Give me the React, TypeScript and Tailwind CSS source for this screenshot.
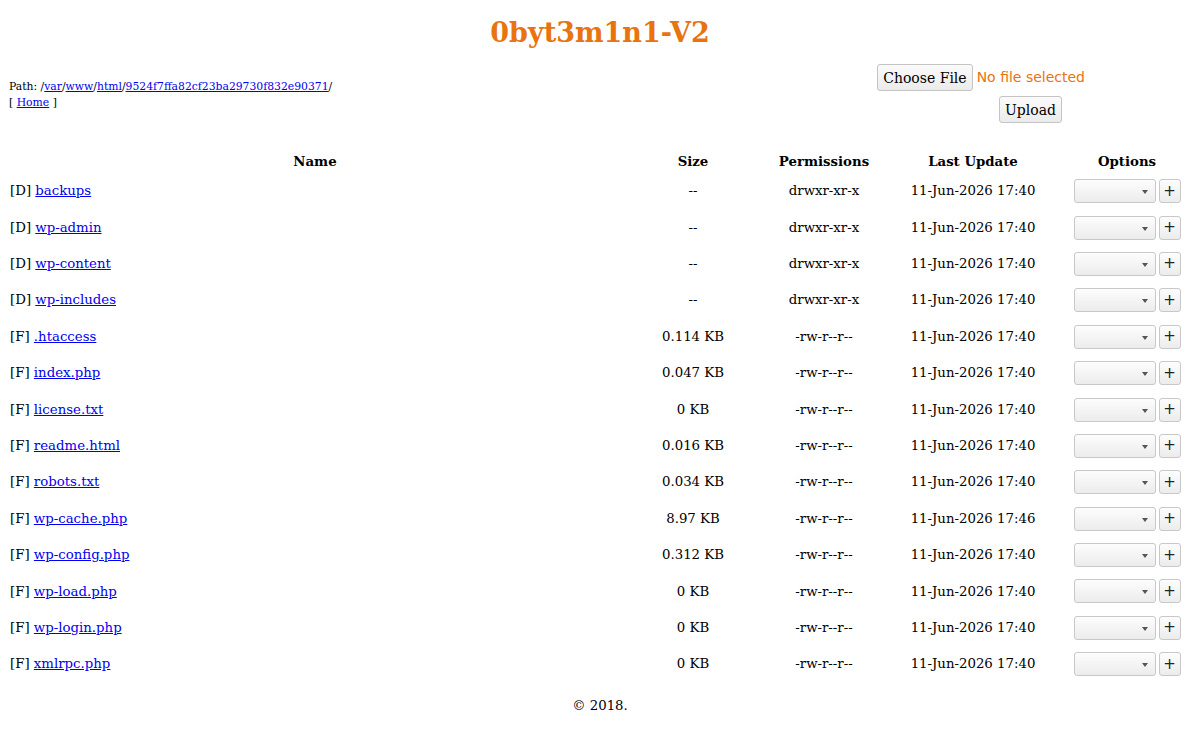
import React from 'react'

type Entry = {
  kind: 'D' | 'F'
  name: string
  size: string
  perms: string
  updated: string
}

const entries: Entry[] = [
  { kind: 'D', name: 'backups', size: '--', perms: 'drwxr-xr-x', updated: '11-Jun-2026 17:40' },
  { kind: 'D', name: 'wp-admin', size: '--', perms: 'drwxr-xr-x', updated: '11-Jun-2026 17:40' },
  { kind: 'D', name: 'wp-content', size: '--', perms: 'drwxr-xr-x', updated: '11-Jun-2026 17:40' },
  { kind: 'D', name: 'wp-includes', size: '--', perms: 'drwxr-xr-x', updated: '11-Jun-2026 17:40' },
  { kind: 'F', name: '.htaccess', size: '0.114 KB', perms: '-rw-r--r--', updated: '11-Jun-2026 17:40' },
  { kind: 'F', name: 'index.php', size: '0.047 KB', perms: '-rw-r--r--', updated: '11-Jun-2026 17:40' },
  { kind: 'F', name: 'license.txt', size: '0 KB', perms: '-rw-r--r--', updated: '11-Jun-2026 17:40' },
  { kind: 'F', name: 'readme.html', size: '0.016 KB', perms: '-rw-r--r--', updated: '11-Jun-2026 17:40' },
  { kind: 'F', name: 'robots.txt', size: '0.034 KB', perms: '-rw-r--r--', updated: '11-Jun-2026 17:40' },
  { kind: 'F', name: 'wp-cache.php', size: '8.97 KB', perms: '-rw-r--r--', updated: '11-Jun-2026 17:46' },
  { kind: 'F', name: 'wp-config.php', size: '0.312 KB', perms: '-rw-r--r--', updated: '11-Jun-2026 17:40' },
  { kind: 'F', name: 'wp-load.php', size: '0 KB', perms: '-rw-r--r--', updated: '11-Jun-2026 17:40' },
  { kind: 'F', name: 'wp-login.php', size: '0 KB', perms: '-rw-r--r--', updated: '11-Jun-2026 17:40' },
  { kind: 'F', name: 'xmlrpc.php', size: '0 KB', perms: '-rw-r--r--', updated: '11-Jun-2026 17:40' },
]

const pathParts = ['var', 'www', 'html', '9524f7ffa82cf23ba29730f832e90371']

function OptionsCell() {
  return (
    <div className="flex items-center justify-center gap-[3px]">
      <div className="relative h-[24px] w-[82px] rounded-[3px] border border-[#c8c8c8] bg-gradient-to-b from-[#fdfdfd] to-[#ececec]">
        <span className="absolute right-[7px] top-[10px] h-0 w-0 border-x-[3px] border-t-[4px] border-x-transparent border-t-[#555]" />
      </div>
      <button className="flex h-[24px] w-[22px] items-center justify-center rounded-[3px] border border-[#c8c8c8] bg-gradient-to-b from-[#fdfdfd] to-[#ececec] font-['DejaVu_Sans',sans-serif] text-[15px] leading-none text-[#222]">
        +
      </button>
    </div>
  )
}

export default function App() {
  return (
    <div className="min-h-screen bg-white font-['DejaVu_Serif',serif] text-[13.3px] text-black">
      <h1 className="pt-[17px] text-center text-[27px] font-bold leading-[32px] text-[#e8730f]">
        0byt3m1n1-V2
      </h1>

      <div className="flex items-start justify-between px-[9px] pt-[15px]">
        <div className="pt-[15px] text-[10.8px] leading-[16px]">
          <div>
            Path: /
            {pathParts.map((p) => (
              <React.Fragment key={p}>
                <a href="#" className="text-[#0000ee] underline">{p}</a>/
              </React.Fragment>
            ))}
          </div>
          <div>
            [ <a href="#" className="text-[#0000ee] underline">Home</a> ]
          </div>
        </div>

        <div className="mr-[106px] flex flex-col items-end">
          <div className="flex items-center gap-[4px]">
            <button className="h-[27px] rounded-[3px] border border-[#c4c4c4] bg-gradient-to-b from-[#fbfbfb] to-[#ebebeb] px-[5px] text-[14px] leading-none">
              Choose File
            </button>
            <span className="font-['DejaVu_Sans',sans-serif] text-[14px] text-[#e8730f]">No file selected</span>
          </div>
          <button className="mr-[23px] mt-[5px] h-[27px] rounded-[3px] border border-[#c4c4c4] bg-gradient-to-b from-[#fbfbfb] to-[#ebebeb] px-[5px] text-[14px] leading-none">
            Upload
          </button>
        </div>
      </div>

      <table className="mx-[8px] mt-[26px] w-[calc(100%-16px)] border-separate border-spacing-[2px]">
        <thead>
          <tr className="h-[21px]">
            <th className="w-[610px] font-bold">Name</th>
            <th className="w-[142px] font-bold">Size</th>
            <th className="w-[116px] font-bold">Permissions</th>
            <th className="w-[178px] font-bold">Last Update</th>
            <th className="font-bold">Options</th>
          </tr>
        </thead>
        <tbody>
          {entries.map((e) => (
            <tr key={e.name} className="h-[34.4px]">
              <td className="text-left">
                [{e.kind}] <a href="#" className="text-[#0000ee] underline">{e.name}</a>
              </td>
              <td className="text-center">{e.size}</td>
              <td className="text-center">{e.perms}</td>
              <td className="text-center">{e.updated}</td>
              <td>
                <OptionsCell />
              </td>
            </tr>
          ))}
        </tbody>
      </table>

      <div className="pt-[13px] text-center">© 2018.</div>
    </div>
  )
}
